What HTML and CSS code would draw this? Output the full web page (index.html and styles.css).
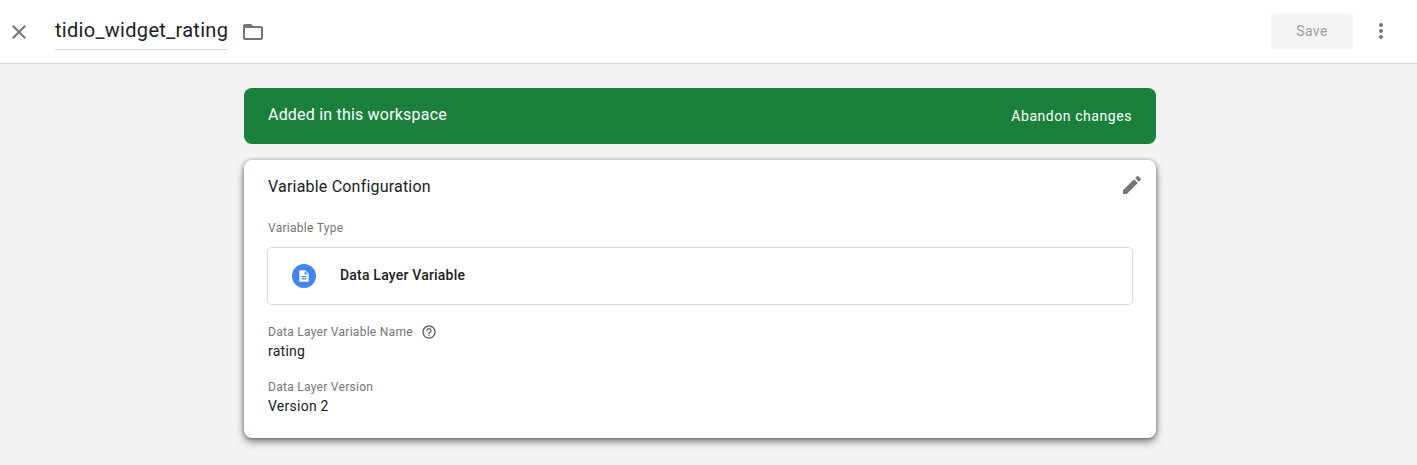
FILE: index.html
```html
<!DOCTYPE html>
<html lang="en">
<head>
<meta charset="utf-8">
<title>tidio_widget_rating</title>
<link rel="stylesheet" href="styles.css">
</head>
<body>
<header class="topbar">
  <button class="icon-btn close-btn" aria-label="Close">
    <svg width="24" height="24" viewBox="0 0 24 24"><path fill="#757575" d="M19 6.41 17.59 5 12 10.59 6.41 5 5 6.41 10.59 12 5 17.59 6.41 19 12 13.41 17.59 19 19 17.59 13.41 12z"/></svg>
  </button>
  <div class="title">tidio_widget_rating</div>
  <svg class="folder" width="24" height="24" viewBox="0 0 24 24"><path fill="#757575" d="M20 6h-8l-2-2H4c-1.1 0-1.99.9-1.99 2L2 18c0 1.1.9 2 2 2h16c1.1 0 2-.9 2-2V8c0-1.1-.9-2-2-2zm0 12H4V8h16v10z"/></svg>
  <div class="spacer"></div>
  <button class="save-btn">Save</button>
  <button class="icon-btn more-btn" aria-label="More">
    <svg width="24" height="24" viewBox="0 0 24 24"><path fill="#757575" d="M12 8c1.1 0 2-.9 2-2s-.9-2-2-2-2 .9-2 2 .9 2 2 2zm0 2c-1.1 0-2 .9-2 2s.9 2 2 2 2-.9 2-2-.9-2-2-2zm0 6c-1.1 0-2 .9-2 2s.9 2 2 2 2-.9 2-2-.9-2-2-2z"/></svg>
  </button>
</header>
<main class="content">
  <div class="banner">
    <span class="banner-title">Added in this workspace</span>
    <span class="banner-action">Abandon changes</span>
  </div>
  <section class="card">
    <div class="card-head">
      <h2 class="card-title">Variable Configuration</h2>
      <svg class="edit" width="24" height="24" viewBox="0 0 24 24"><path fill="#757575" d="M3 17.25V21h3.75L17.81 9.94l-3.75-3.75L3 17.25zM20.71 7.04a1 1 0 0 0 0-1.41l-2.34-2.34a1 1 0 0 0-1.41 0l-1.83 1.83 3.75 3.75 1.83-1.83z"/></svg>
    </div>
    <div class="label type-label">Variable Type</div>
    <div class="type-box">
      <span class="type-icon">
        <svg width="14" height="14" viewBox="0 0 24 24"><path fill="#fff" d="M14 2H6c-1.1 0-2 .9-2 2v16c0 1.1.9 2 2 2h12c1.1 0 2-.9 2-2V8l-6-6zm2 16H8v-2h8v2zm0-4H8v-2h8v2zm-3-5V3.5L18.5 9H13z"/></svg>
      </span>
      <span class="type-name">Data Layer Variable</span>
    </div>
    <div class="label name-label">Data Layer Variable Name
      <svg class="help" width="16" height="16" viewBox="0 0 24 24"><path fill="#5f6368" d="M11 18h2v-2h-2v2zm1-16C6.48 2 2 6.48 2 12s4.48 10 10 10 10-4.48 10-10S17.52 2 12 2zm0 18c-4.41 0-8-3.59-8-8s3.59-8 8-8 8 3.59 8 8-3.59 8-8 8zm0-14c-2.21 0-4 1.79-4 4h2c0-1.1.9-2 2-2s2 .9 2 2c0 2-3 1.75-3 5h2c0-2.25 3-2.5 3-5 0-2.21-1.79-4-4-4z"/></svg>
    </div>
    <div class="value">rating</div>
    <div class="label version-label">Data Layer Version</div>
    <div class="value">Version 2</div>
  </section>
</main>
</body>
</html>
```
FILE: styles.css
```css
* { box-sizing: border-box; }
html, body { margin: 0; height: 100%; }
body {
  background: #f1f3f4;
  font-family: Roboto, "Liberation Sans", sans-serif;
  color: #202124;
  overflow: hidden;
}
.topbar {
  height: 64px;
  background: #fff;
  border-bottom: 1px solid #dadce0;
  display: flex;
  align-items: center;
  padding: 0 24px 0 7px;
}
.icon-btn {
  width: 24px;
  height: 24px;
  padding: 0;
  border: 0;
  background: none;
  display: flex;
}
.title {
  margin-left: 24px;
  height: 36px;
  margin-top: 1px;
  line-height: 33px;
  font-size: 20px;
  letter-spacing: 0.3px;
  border-bottom: 1px solid #dadce0;
  white-space: nowrap;
}
.folder { margin-left: 13px; }
.spacer { flex: 1; }
.save-btn {
  width: 82px;
  height: 36px;
  margin-top: -1px;
  border: 0;
  border-radius: 4px;
  background: #f5f5f5;
  color: #9e9e9e;
  font: 400 14px Roboto, sans-serif;
  letter-spacing: 0.4px;
}
.more-btn { margin-left: 16px; margin-top: -2px; }
.content {
  width: 912px;
  margin: 24px auto 0;
  position: relative;
  left: -8.5px;
}
.banner {
  height: 56px;
  background: #1a803b;
  color: #fff;
  border-radius: 8px;
  display: flex;
  align-items: center;
  justify-content: space-between;
  padding: 0 24px;
}
.banner-title { font-size: 16px; letter-spacing: 0.2px; margin-top: -3px; }
.banner-action { font-size: 14px; font-weight: 400; letter-spacing: 0.56px; }
.card {
  height: 278px;
  margin-top: 16px;
  background: #fff;
  border-radius: 8px;
  padding: 0 24px;
  box-shadow: 0 4px 8px rgba(0,0,0,.4), 0 1px 4px rgba(0,0,0,.4);
}
.card-head {
  display: flex;
  justify-content: space-between;
  height: 50px;
  padding-top: 17px;
  margin-right: -12px;
}
.card-title { margin: 0; font-size: 16px; font-weight: 400; line-height: 20px; letter-spacing: 0.2px; }
.edit { margin-top: -4px; }
.label {
  font-size: 12px;
  line-height: 16px;
  letter-spacing: 0.28px;
  color: #757575;
}
.type-label { margin-top: 10px; }
.type-box {
  height: 58px;
  margin: 11px -1px 0;
  border: 1px solid #dadce0;
  border-radius: 4px;
  display: flex;
  align-items: center;
  padding-left: 24px;
}
.type-icon {
  width: 24px;
  height: 24px;
  border-radius: 50%;
  background: #4285f4;
  display: flex;
  align-items: center;
  justify-content: center;
}
.type-name {
  margin-left: 24px;
  margin-top: -2px;
  font-size: 14px;
  font-weight: 500;
  letter-spacing: 0.2px;
}
.name-label { margin-top: 19px; display: flex; align-items: center; gap: 8px; }
.value { font-size: 14px; line-height: 20px; letter-spacing: 0.25px; margin-top: 1px; }
.version-label { margin-top: 18px; }
```
